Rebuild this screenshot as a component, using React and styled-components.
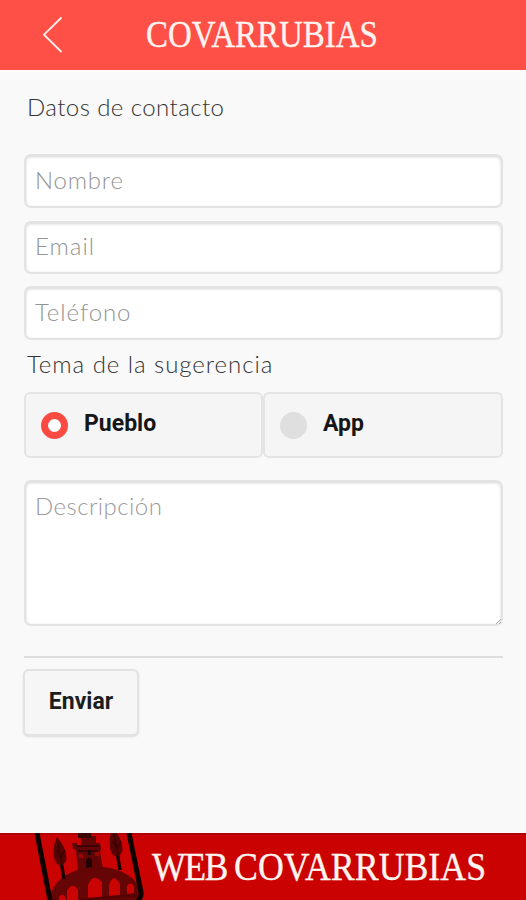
import React from "react";
import styled, { createGlobalStyle } from "styled-components";

const GlobalStyle = createGlobalStyle`
  * { box-sizing: border-box; }
  body { margin: 0; background: #f9f9f9; }
`;

const Screen = styled.div`
  width: 526px;
  height: 900px;
  display: flex;
  flex-direction: column;
  overflow: hidden;
  background: #f9f9f9;
  font-family: Lato, sans-serif;
`;

const Header = styled.header`
  height: 70px;
  flex: none;
  display: flex;
  align-items: flex-start;
  background: #ff5048;
  box-shadow: 0 2px 1px #fff;
`;

const BackButton = styled.button`
  width: 24px;
  height: 40px;
  margin: 15px 0 0 41px;
  padding: 0;
  border: 0;
  background: none;
  flex: none;
`;

const Wordmark = styled.span`
  display: block;
  flex: none;
  width: 0;
  white-space: nowrap;
  color: #fff4f0;
  -webkit-text-stroke: 0.35px #fff4f0;
  font-family: "Liberation Serif", serif;
  font-size: ${(p) => p.$size}px;
  line-height: 50px;
  transform: scaleX(${(p) => p.$stretch});
  transform-origin: 0 50%;
  margin: ${(p) => p.$top}px 0 0 ${(p) => p.$left}px;
`;

const TightWord = styled.span`
  letter-spacing: -1.8px;
`;

const Form = styled.form`
  flex: 1;
  display: flex;
  flex-direction: column;
  padding: 0 23px 0 24px;
`;

const Heading = styled.h2`
  margin: ${(p) => p.$top}px 0 0 3px;
  height: 30px;
  line-height: 30px;
  font-size: 24px;
  font-weight: 300;
  letter-spacing: ${(p) => p.$track}px;
  color: #333;
  white-space: nowrap;
`;

const fieldLook = `
  display: block;
  width: 100%;
  border: 2px solid #e3e3e3;
  border-radius: 7px;
  background: #fff;
  box-shadow: inset 0 1px 3px #d6d6d6;
  font-family: Lato, sans-serif;
  font-size: 24px;
  font-weight: 300;
  outline: none;
`;

const Fields = styled.div`
  display: grid;
  grid-template-rows: 54px 53px 54px;
  row-gap: 12.5px;
  margin-top: 32px;
`;

const Input = styled.input`
  ${fieldLook}
  height: 100%;
  padding: 0 9px 4px;
  &::placeholder { color: #949494; opacity: 1; letter-spacing: ${(p) => p.$track}px; }
`;

const Description = styled.textarea`
  ${fieldLook}
  height: 146px;
  margin-top: 22px;
  padding: 9px;
  line-height: 30px;
  resize: none;
  &::placeholder { color: #9b9b9b; opacity: 1; letter-spacing: 0.45px; }
`;

const DescriptionBox = styled.div`
  position: relative;
`;

const Grip = styled.svg`
  position: absolute;
  right: 1px;
  bottom: 1px;
`;

const Options = styled.div`
  display: grid;
  grid-template-columns: 239px 240px;
  height: 66px;
  margin-top: 13px;
`;

const Option = styled.label`
  display: flex;
  align-items: center;
  gap: 16px;
  padding: 0 0 2px 15px;
  border: 2px solid #e4e4e4;
  border-radius: 6px;
  background: #f5f5f5;
  color: #161616;
  font: 700 23px Roboto, sans-serif;
  line-height: 30px;
`;

const Radio = styled.span`
  width: 27px;
  height: 27px;
  margin-top: 3px;
  border-radius: 50%;
  border: 7.5px solid ${(p) => (p.$checked ? "#fb4a42" : "#dfdfdf")};
  background: ${(p) => (p.$checked ? "#fff" : "#dfdfdf")};
`;

const Divider = styled.hr`
  width: 100%;
  height: 2px;
  margin: 30px 0 11px;
  border: 0;
  background: #dedede;
`;

const Submit = styled.button`
  width: 116px;
  height: 67px;
  margin-left: -1px;
  padding: 0 0 3px;
  border: 2px solid #e3e3e3;
  border-radius: 6px;
  background: #f6f6f6;
  box-shadow: 0 1px 2px rgba(0, 0, 0, 0.12);
  color: #1d1d1d;
  font: 700 23px Roboto, sans-serif;
`;

const Footer = styled.footer`
  height: 67px;
  flex: none;
  display: flex;
  align-items: flex-start;
  background: #cb0202;
  box-shadow: inset 0 2px 1px #b30000;
`;

const Emblem = styled.svg`
  flex: none;
  display: block;
  margin-left: 30px;
`;

function Tree({ x, y }) {
  return (
    <g transform={`translate(${x} ${y})`}>
      <path d="M0 20 L3 38" stroke="#170000" strokeWidth="3.4" />
      <path d="M-4 -4 C-9 5 -8 19 -4 23 Q2 26 5 20 C7 11 1 2 -4 -4Z" fill="#580404" />
      <path d="M-3 2 L1 23 M-5 9 L-1 15 M4 9 L0 16" stroke="#390000" strokeWidth="1.3" />
    </g>
  );
}

export default function App() {
  return (
    <>
      <GlobalStyle />
      <Screen>
        <Header>
          <BackButton aria-label="Volver">
            <svg width="24" height="40" fill="none" stroke="#fff0ed" strokeWidth="1.8">
              <path d="M20.5 2.5 L3 19.7 L20.5 37" />
            </svg>
          </BackButton>
          <Wordmark $size={37} $stretch={0.89} $top={10} $left={81}>COVARRUBIAS</Wordmark>
        </Header>
        <Form>
          <Heading $top={22} $track={0.42}>Datos de contacto</Heading>
          <Fields>
            <Input placeholder="Nombre" $track={0.8} />
            <Input placeholder="Email" $track={1} />
            <Input placeholder="Teléfono" $track={0.95} />
          </Fields>
          <Heading $top={9} $track={0.95}>Tema de la sugerencia</Heading>
          <Options>
            <Option>
              <Radio $checked />
              Pueblo
            </Option>
            <Option>
              <Radio />
              App
            </Option>
          </Options>
          <DescriptionBox>
            <Description placeholder="Descripción" />
            <Grip width="7" height="7" fill="none" stroke="#aaa">
              <path d="M1 6 L6 1 M4 6 L6 4" />
            </Grip>
          </DescriptionBox>
          <Divider />
          <Submit type="button">Enviar</Submit>
        </Form>
        <Footer>
          <Emblem width="116" height="67" viewBox="30 833 116 67">
            <path d="M49 900 C53 876 77 867 99 867 C119 867 133 877 139 886 L141 900Z" fill="#650505" />
            <path d="M78 872 L76 850 L73 849 L72 843 L77 843 L77 846 L81 846 L81 836 L96 836 L96 843 L100 843 L101 849 L100 852 L103 869Z" fill="#610505" />
            <path d="M78 833 H91 V838 H78Z" fill="#3b0505" />
            <path d="M76 846 H99 M77 851 H98" stroke="#340202" strokeWidth="1.5" />
            <path d="M86 868 V860 Q89 855 92 860 V867Z M88 850h3v5h-3z" fill="#200303" />
            <path d="M79 854h4v4h-4z M95 852h4v4h-4z" fill="#980606" />
            <Tree x="61" y="841" />
            <Tree x="117" y="832" />
            <g fill="#ca0303">
              <path d="M59 900 V897 Q63 892 66 898 V900Z" />
              <path d="M67 900 V891 Q72 881 78 890 V900Z" />
              <path d="M88 900 V885 Q93 872 102 882 V900Z" />
              <path d="M109 897 V885 Q113 872 120 884 V895Z" />
              <path d="M127 894 V886 Q131 880 134 887 V893Z" />
            </g>
            <path d="M81 900 L137 895" stroke="#560202" strokeWidth="3" />
            <path d="M37 833 L50 900" stroke="#110000" strokeWidth="5" />
            <path d="M129 833 L141 892 Q142 896 138 901" fill="none" stroke="#110000" strokeWidth="5" />
          </Emblem>
          <Wordmark $size={40} $stretch={0.895} $top={9} $left={6}>
            <TightWord>WEB </TightWord>COVARRUBIAS
          </Wordmark>
        </Footer>
      </Screen>
    </>
  );
}
